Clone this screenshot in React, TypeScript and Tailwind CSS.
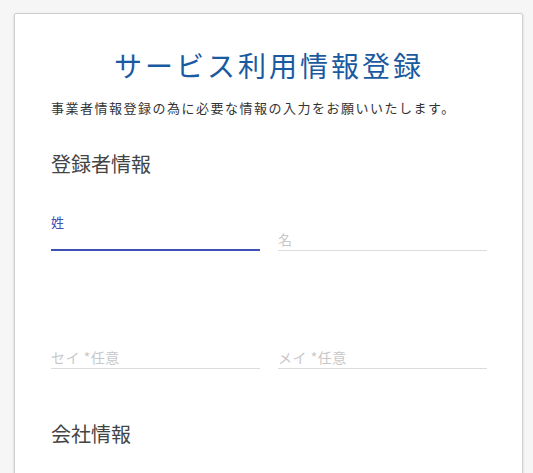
import React from 'react';

const font = { fontFamily: '"Noto Sans CJK JP", "Noto Sans", sans-serif' };

interface FieldProps {
  label: string;
  focused?: boolean;
}

const Field: React.FC<FieldProps> = ({ label, focused }) => {
  if (focused) {
    return (
      <div className="flex flex-col">
        <label className="text-[13px] leading-[18px] text-[#3f51b5]">{label}</label>
        <div className="h-[20px] border-b-2 border-[#3f51b5]" />
      </div>
    );
  }
  return (
    <div className="h-[22px] border-b border-[#dcdcdc]">
      <span className="block text-[14px] leading-[21px] tracking-[0.5px] text-[#c8c8c8]">{label}</span>
    </div>
  );
};

export default function App() {
  return (
    <div className="min-h-screen bg-[#f6f6f6] pt-[13px] overflow-hidden" style={font}>
      <div className="ml-[14px] w-[509px] h-[470px] bg-white border border-[#cfcfcf] rounded-[2px] shadow-[0_1px_3px_rgba(0,0,0,0.15)] pl-[36px] pr-[35px] pt-[31px]">
        <h1 className="text-center text-[28px] leading-[40px] tracking-[3px] text-[#1a5aa0] font-normal">
          サービス利用情報登録
        </h1>
        <p className="mt-[13px] text-[13px] leading-[20px] tracking-[1.5px] text-[#333]">
          事業者情報登録の為に必要な情報の入力をお願いいたします。
        </p>
        <h2 className="mt-[32px] text-[20px] leading-[28px] text-[#444]">登録者情報</h2>

        <div className="mt-[35px] grid grid-cols-2 gap-x-[18px] items-end">
          <Field label="姓" focused />
          <Field label="名" />
        </div>

        <div className="mt-[96px] grid grid-cols-2 gap-x-[18px] items-end">
          <Field label="セイ *任意" />
          <Field label="メイ *任意" />
        </div>

        <h2 className="mt-[51px] text-[20px] leading-[28px] text-[#444]">会社情報</h2>
      </div>
    </div>
  );
}
